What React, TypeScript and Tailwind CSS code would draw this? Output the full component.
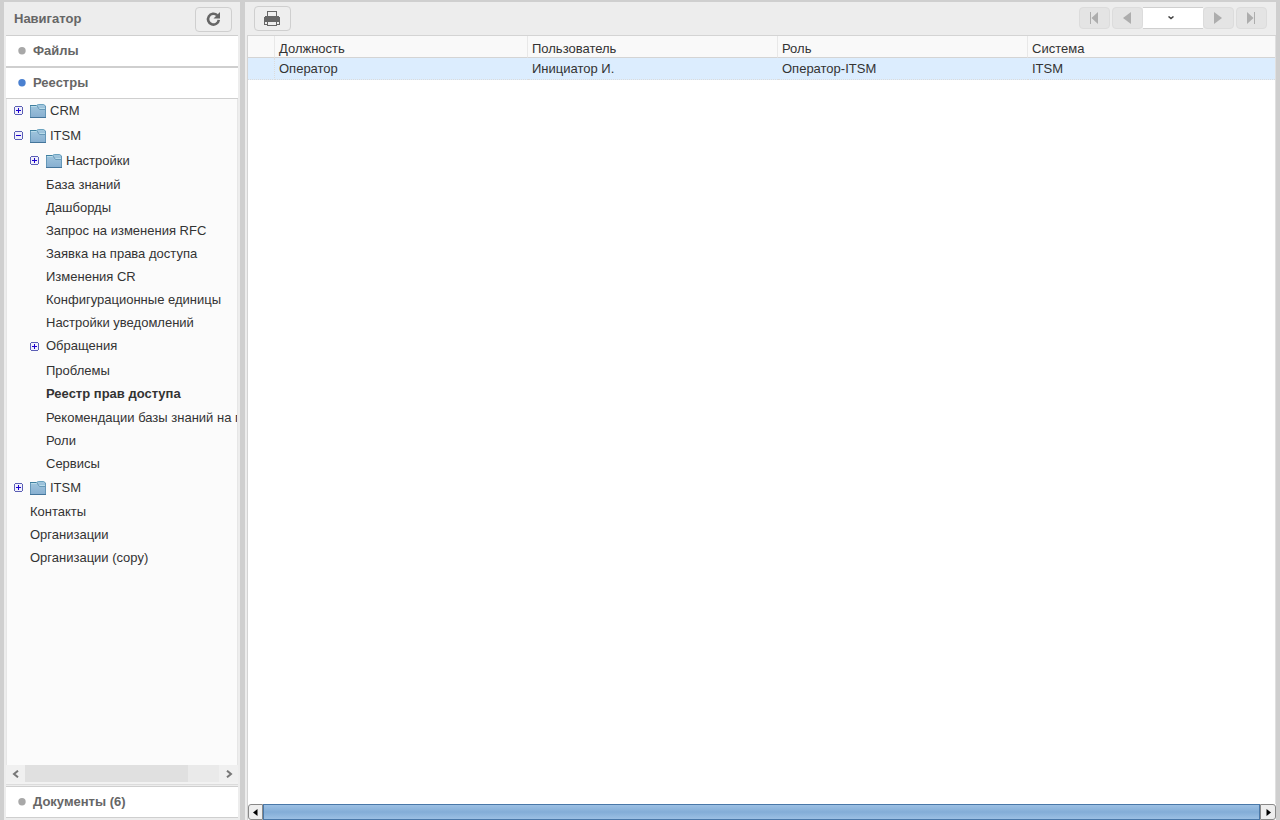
import React, { useState } from "react";

interface TreeNode {
  id: string;
  label: string;
  folder?: boolean;
  children?: TreeNode[];
}

// Registries tree, nodes with an empty children list are collapsed
const registries: TreeNode[] = [
  { id: "crm", label: "CRM", folder: true, children: [] },
  {
    id: "itsm",
    label: "ITSM",
    folder: true,
    children: [
      { id: "settings", label: "Настройки", folder: true, children: [] },
      { id: "kb", label: "База знаний" },
      { id: "dashboards", label: "Дашборды" },
      { id: "rfc", label: "Запрос на изменения RFC" },
      { id: "access", label: "Заявка на права доступа" },
      { id: "cr", label: "Изменения CR" },
      { id: "ci", label: "Конфигурационные единицы" },
      { id: "notifications", label: "Настройки уведомлений" },
      { id: "requests", label: "Обращения", children: [] },
      { id: "problems", label: "Проблемы" },
      { id: "rights", label: "Реестр прав доступа" },
      { id: "advice", label: "Рекомендации базы знаний на п" },
      { id: "roles", label: "Роли" },
      { id: "services", label: "Сервисы" },
    ],
  },
  { id: "itsm2", label: "ITSM", folder: true, children: [] },
  { id: "contacts", label: "Контакты" },
  { id: "orgs", label: "Организации" },
  { id: "orgs-copy", label: "Организации (copy)" },
];

const columns = ["Должность", "Пользователь", "Роль", "Система"];

const rows = [["Оператор", "Инициатор И.", "Оператор-ITSM", "ITSM"]];

const ToggleIcon = ({ open }: { open: boolean }) => (
  <svg width="9" height="9" viewBox="0 0 9 9" shapeRendering="crispEdges">
    <rect x="1" y="1" width="7" height="7" fill="#f0f0fb" />
    <path
      d="M1 0h7v1H1zM1 8h7v1H1zM0 1h1v7H0zM8 1h1v7H8z"
      fill="#5b5fb5"
    />
    <path d="M2 4h5v1H2z" fill="#1c00cf" />
    {!open && <path d="M4 2h1v5H4z" fill="#1c00cf" />}
  </svg>
);

const FolderIcon = () => (
  <svg width="16" height="14" viewBox="0 0 16 14">
    <defs>
      <linearGradient id="folder" x1="0" y1="0" x2="0" y2="1">
        <stop offset="0" stopColor="#a3c8de" />
        <stop offset="1" stopColor="#86aed0" />
      </linearGradient>
    </defs>
    <path d="M0 1h6.500l2-1h5L16 2v12H0z" fill="url(#folder)" />
    <path d="M0 1.500h6.500" stroke="#3f7f9f" />
    <path d="M6.500 1.500l2-1h5l2 1.500" fill="none" stroke="#6ba3bf" />
    <path d="M1 2.500h6M9 4.500h6" stroke="#b9dcea" />
    <path d="M7 2l2.500 3.500H16" fill="none" stroke="#6899b8" />
    <path d="M0.500 2v11.500M15.500 2v11.500" fill="none" stroke="#6497b8" />
    <path d="M0 13.500h16" stroke="#44759b" />
  </svg>
);

interface TreeItemProps {
  node: TreeNode;
  selected: string;
  onSelect: (id: string) => void;
}

const TreeItem = ({ node, selected, onSelect }: TreeItemProps) => {
  const hasChildren = node.children !== undefined;
  const [open, setOpen] = useState(
    hasChildren && node.children!.length > 0,
  );
  const isSelected = selected === node.id;

  return (
    <li>
      <div
        className={`flex items-start ${hasChildren ? "h-[25px]" : isSelected ? "h-6" : "h-[23px]"}`}
      >
        {hasChildren ? (
          <button
            type="button"
            aria-label={open ? "Свернуть" : "Развернуть"}
            className="mt-[7px] mr-[7px] shrink-0"
            onClick={() => setOpen(!open)}
          >
            <ToggleIcon open={open} />
          </button>
        ) : (
          <span className="w-4 shrink-0" />
        )}
        <button
          type="button"
          className={`flex items-start whitespace-nowrap ${node.folder ? "leading-6" : "leading-[22px]"} ${isSelected ? "font-bold" : ""}`}
          onClick={() => onSelect(node.id)}
        >
          {node.folder && (
            <span className="mt-[5px] mr-1 shrink-0">
              <FolderIcon />
            </span>
          )}
          {node.label}
        </button>
      </div>
      {open && (
        <ul className="pl-4">
          {node.children!.map((child) => (
            <TreeItem
              key={child.id}
              node={child}
              selected={selected}
              onSelect={onSelect}
            />
          ))}
        </ul>
      )}
    </li>
  );
};

interface SectionProps {
  title: string;
  active?: boolean;
}

const Section = ({ title, active }: SectionProps) => (
  <button
    type="button"
    className="flex h-8 w-full shrink-0 items-center border-y border-[#cfcfcf] bg-white pl-3 font-bold text-[#666]"
  >
    <svg width="8" height="8" viewBox="0 0 8 8" className="mr-[7px]">
      <circle cx="4" cy="3.700" r="3.700" fill={active ? "#4a80d0" : "#a8a8a8"} />
    </svg>
    {title}
  </button>
);

const pagerButton =
  "flex h-[22px] w-[31px] items-center justify-center rounded-[4px] border border-[#dcdcdc] bg-[#e4e4e4] pr-0.5 text-[#adadad]";

const App = () => {
  const [selected, setSelected] = useState("rights");

  return (
    <div className="flex h-screen gap-[5px] overflow-hidden bg-[#cfcfcf] px-1 pt-0.5 font-['Liberation_Sans',Arial,sans-serif] text-[13px] text-[#333]">
      {/* Navigator */}
      <aside className="flex w-[236px] shrink-0 flex-col bg-[#ededed] px-0.5">
        <header className="flex h-[33px] shrink-0 items-center justify-between pr-1.5 pl-2">
          <h1 className="font-bold text-[#666]">Навигатор</h1>
          <button
            type="button"
            aria-label="Обновить"
            className="mt-0.5 flex h-[25px] w-[37px] items-center justify-center rounded-[4px] border border-[#cfcfcf] bg-[#eee]"
          >
            <svg width="15" height="15" viewBox="0 0 15 15">
              <path
                d="M11.200 3.300A5.400 5.400 0 1 0 12.800 7.800"
                fill="none"
                stroke="#666"
                strokeWidth="2.600"
              />
              <path d="M14 0v6.500H7.500z" fill="#666" />
            </svg>
          </button>
        </header>
        <Section title="Файлы" />
        <Section title="Реестры" active />
        <nav className="min-h-0 flex-1 overflow-hidden border-x border-[#e6e6e6] bg-[#fbfbfb] pl-[7px]">
          <ul>
            {registries.map((node) => (
              <TreeItem
                key={node.id}
                node={node}
                selected={selected}
                onSelect={setSelected}
              />
            ))}
          </ul>
        </nav>
        <div className="flex h-[19px] shrink-0 items-stretch border-b-2 border-[#f2f2f2] bg-[#f0f0f0]">
          <button
            type="button"
            aria-label="Влево"
            className="flex w-[19px] items-center justify-center"
          >
            <svg width="8" height="8" viewBox="0 0 8 8">
              <path d="M6 .7L2 4l4 3.300" fill="none" stroke="#777" strokeWidth="2" />
            </svg>
          </button>
          <div className="flex-1 bg-[#eaeaea]">
            <div className="h-full w-[84%] bg-[#e0e0e0]" />
          </div>
          <button
            type="button"
            aria-label="Вправо"
            className="flex w-[19px] items-center justify-center"
          >
            <svg width="8" height="8" viewBox="0 0 8 8">
              <path d="M2 .7L6 4 2 7.300" fill="none" stroke="#777" strokeWidth="2" />
            </svg>
          </button>
        </div>
        <div className="mb-0.5 shrink-0 border-t border-[#dcdcdc] pt-px">
          <Section title="Документы (6)" />
        </div>
      </aside>

      {/* Registry content */}
      <main className="flex min-w-0 flex-1 flex-col bg-[#ededed]">
        <div className="flex h-[33px] shrink-0 items-start justify-between px-[9px]">
          <button
            type="button"
            aria-label="Печать"
            className="mt-1 flex h-[25px] w-[37px] items-center justify-center rounded-[4px] border border-[#cfcfcf] bg-[#eee] pr-px"
          >
            <svg
              width="16"
              height="15"
              viewBox="0 0 16 15"
              shapeRendering="crispEdges"
            >
              <path d="M3 0h10v6H3z" fill="#666" />
              <path d="M4 1h8v4H4z" fill="#eee" />
              <path d="M1 5h2v1h10V5h2v1h1v5H0V6h1z" fill="#666" />
              <path d="M0 11h1v3H0zM15 11h1v3h-1zM0 13h3v1H0zM13 13h3v1h-3z" fill="#666" />
              <path d="M3 9h10v6H3z" fill="#666" />
              <path d="M4 11h8v3H4z" fill="#eee" />
            </svg>
          </button>
          <div className="mt-[5px] flex">
            <button
              type="button"
              aria-label="Первая страница"
              className={`${pagerButton} mr-0.5`}
            >
              <svg width="8" height="12" viewBox="0 0 8 12" fill="currentColor">
                <path d="M0 0h1v12H0zM8 0v12L1.500 6z" />
              </svg>
            </button>
            <button
              type="button"
              aria-label="Предыдущая страница"
              className={pagerButton}
            >
              <svg width="8" height="12" viewBox="0 0 8 12" fill="currentColor">
                <path d="M8 0v12L0 6z" />
              </svg>
            </button>
            <div className="relative">
              <select
                aria-label="Страница"
                className="block h-[22px] w-[60px] appearance-none border-y border-[#cfcfcf] bg-white"
              />
              <svg
                width="6"
                height="4"
                viewBox="0 0 6 4"
                className="pointer-events-none absolute top-[9px] left-[25px]"
              >
                <path d="M.5 .5L3 2.500 5.500 .5" fill="none" stroke="#444" strokeWidth="1.500" />
              </svg>
            </div>
            <button
              type="button"
              aria-label="Следующая страница"
              className={`${pagerButton} mr-0.5`}
            >
              <svg width="8" height="12" viewBox="0 0 8 12" fill="currentColor">
                <path d="M0 0v12L8 6z" />
              </svg>
            </button>
            <button
              type="button"
              aria-label="Последняя страница"
              className={pagerButton}
            >
              <svg width="8" height="12" viewBox="0 0 8 12" fill="currentColor">
                <path d="M7 0h1v12H7zM0 0v12L6.500 6z" />
              </svg>
            </button>
          </div>
        </div>

        <div className="ml-0.5 flex min-h-0 flex-1 flex-col border-t border-l border-[#d4d4d4] bg-white">
          <div className="min-h-0 flex-1 overflow-hidden border-r border-[#e0e0e0]">
            <table className="w-full table-fixed border-separate border-spacing-0 text-left">
              <colgroup>
                <col className="w-[27px]" />
                <col className="w-[253px]" />
                <col className="w-[250px]" />
                <col className="w-[250px]" />
                <col />
              </colgroup>
              <thead>
                <tr className="h-[22px] bg-[#f9f9f9]">
                  <td className="border-r border-b border-[#d4d4d4] border-r-[#e8e8e8]" />
                  {columns.map((column) => (
                    <th
                      key={column}
                      className="border-r border-b border-[#d4d4d4] border-r-[#e8e8e8] px-1 pt-[5px] leading-4 font-normal last:border-r-0"
                    >
                      {column}
                    </th>
                  ))}
                </tr>
              </thead>
              <tbody>
                {rows.map((row) => (
                  <tr key={row[0]} className="h-[22px] bg-[#dcedfe]">
                    <td className="border-r border-b border-dotted border-[#dcdcdc]" />
                    {row.map((cell, index) => (
                      <td
                        key={index}
                        className="border-b border-dotted border-[#dcdcdc] px-1 leading-5"
                      >
                        {cell}
                      </td>
                    ))}
                  </tr>
                ))}
              </tbody>
            </table>
          </div>
          {/* Horizontal scrollbar */}
          <div className="flex h-4 shrink-0 items-stretch">
            <button
              type="button"
              aria-label="Прокрутить влево"
              className="flex w-[15px] items-center justify-center rounded-l-[3px] border border-[#888] bg-[#eee]"
            >
              <svg width="5" height="7" viewBox="0 0 5 7">
                <path d="M4.500 0v7L0 3.500z" fill="#000" />
              </svg>
            </button>
            <div className="flex-1 border border-[#4a78a8] bg-linear-to-b from-[#9cc0e4] via-[#83add7] to-[#9cc0e4]" />
            <button
              type="button"
              aria-label="Прокрутить вправо"
              className="flex w-4 items-center justify-center rounded-r-[3px] border border-[#888] bg-[#eee]"
            >
              <svg width="5" height="7" viewBox="0 0 5 7">
                <path d="M.5 0v7L5 3.500z" fill="#000" />
              </svg>
            </button>
          </div>
        </div>
      </main>
    </div>
  );
};

export default App;
